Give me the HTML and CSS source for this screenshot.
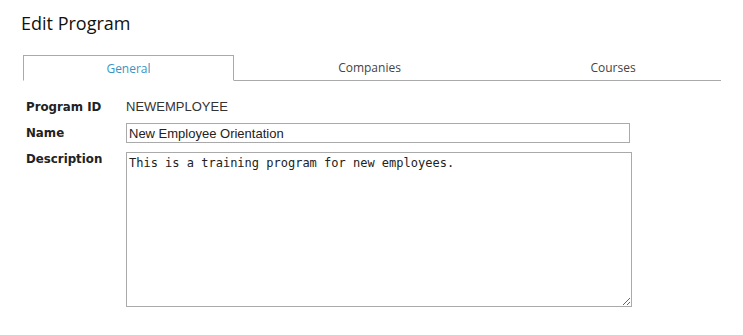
FILE: index.html
```html
<!DOCTYPE html>
<html>
<head>
<meta charset="utf-8">
<link rel="stylesheet" href="styles.css">
</head>
<body>
<div class="page">
  <h1 class="title">Edit Program</h1>
  <div class="tabs">
    <div class="tab tab-general active">General</div>
    <div class="tab tab-companies">Companies</div>
    <div class="tab tab-courses">Courses</div>
  </div>
  <div class="form">
    <div class="row row-id">
      <div class="label">Program ID</div>
      <div class="value">NEWEMPLOYEE</div>
    </div>
    <div class="row row-name">
      <div class="label">Name</div>
      <input class="input" type="text" value="New Employee Orientation">
    </div>
    <div class="row row-desc">
      <div class="label">Description</div>
      <textarea class="textarea">This is a training program for new employees.</textarea>
    </div>
  </div>
</div>
</body>
</html>
```
FILE: styles.css
```css
html, body { margin: 0; padding: 0; background: #fff; }
.page { padding: 12px 0 0 0; }
.title {
  margin: 0 0 0 21px;
  font-family: "Open Sans", "Noto Sans", sans-serif;
  font-weight: 400;
  font-size: 18px;
  line-height: 22px;
  color: #111;
}
.tabs {
  display: flex;
  margin: 21px 0 0 23px;
  width: 698px;
  border-bottom: 1px solid #aaa;
  height: 25px;
}
.tab {
  font-family: "Open Sans", "Noto Sans", sans-serif;
  font-size: 12px;
  color: #444;
  text-align: center;
  line-height: 26px;
  box-sizing: border-box;
}
.tab-general { width: 211px; }
.tab-companies { width: 271px; }
.tab-courses { width: 216px; }
.tab.active {
  color: #3a94c0;
  border: 1px solid #aaa;
  border-bottom: 1px solid #fff;
  height: 26px;
  line-height: 25px;
  margin-bottom: -1px;
  background: #fff;
}
.form {
  display: flex;
  flex-direction: column;
  margin: 14px 0 0 26px;
}
.row {
  display: flex;
  align-items: flex-start;
}
.row-id { height: 21px; }
.row-name { margin-top: 7px; }
.row-desc { margin-top: 9px; }
.label {
  width: 100px;
  flex: none;
  font-family: "DejaVu Sans", sans-serif;
  font-weight: bold;
  font-size: 11.8px;
  color: #222;
  line-height: 18px;
}
.row-id .label, .row-id .value { padding-top: 3px; }
.row-name .label { padding-top: 1px; }
.row-desc .label { margin-top: -2px; }
.value {
  font-family: "Liberation Sans", Arial, sans-serif;
  font-size: 13px;
  color: #333;
  line-height: 18px;
}
.input {
  box-sizing: border-box;
  width: 504px;
  height: 20px;
  border: 1px solid #aaa;
  padding: 0 2px;
  margin: 0;
  font-family: "Liberation Sans", Arial, sans-serif;
  font-size: 13px;
  color: #222;
  outline: none;
}
.textarea {
  display: block;
  box-sizing: border-box;
  width: 506px;
  height: 155px;
  border: 1px solid #aaa;
  padding: 3px 2px;
  margin: 0;
  font-family: "DejaVu Sans Mono", "Liberation Mono", monospace;
  font-size: 12px;
  color: #222;
  resize: both;
  outline: none;
}
```
